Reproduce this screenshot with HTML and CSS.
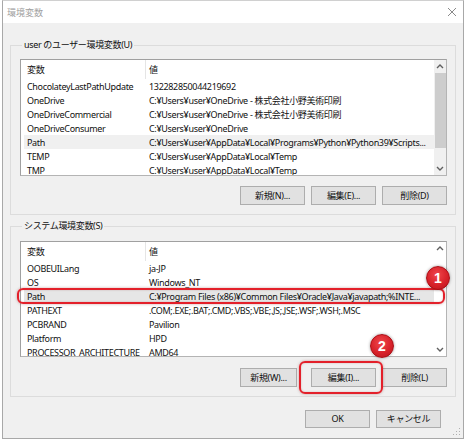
FILE: index.html
```html
<!DOCTYPE html>
<html lang="ja">
<head>
<meta charset="utf-8">
<title>環境変数</title>
<link rel="stylesheet" href="styles.css">
</head>
<body>
<div class="window">
  <div class="titlebar">
    <span class="title">環境変数</span>
    <svg class="close" width="10" height="10" viewBox="0 0 10 10"><path d="M1 1L9 9M9 1L1 9" stroke="#8a8a8a" stroke-width="1" fill="none"/></svg>
  </div>
  <div class="content">
    <fieldset class="group group-user">
      <legend>user のユーザー環境変数(U)</legend>
      <div class="list">
        <div class="list-body">
          <div class="list-header"><span class="col-name">変数</span><span class="col-value">値</span></div>
          <div class="row"><span class="col-name">ChocolateyLastPathUpdate</span><span class="col-value">132282850044219692</span></div>
          <div class="row"><span class="col-name">OneDrive</span><span class="col-value">C:¥Users¥user¥OneDrive - 株式会社小野美術印刷</span></div>
          <div class="row"><span class="col-name">OneDriveCommercial</span><span class="col-value">C:¥Users¥user¥OneDrive - 株式会社小野美術印刷</span></div>
          <div class="row"><span class="col-name">OneDriveConsumer</span><span class="col-value">C:¥Users¥user¥OneDrive</span></div>
          <div class="row row-selected"><span class="col-name">Path</span><span class="col-value">C:¥Users¥user¥AppData¥Local¥Programs¥Python¥Python39¥Scripts...</span></div>
          <div class="row"><span class="col-name">TEMP</span><span class="col-value">C:¥Users¥user¥AppData¥Local¥Temp</span></div>
          <div class="row"><span class="col-name">TMP</span><span class="col-value">C:¥Users¥user¥AppData¥Local¥Temp</span></div>
        </div>
        <div class="scrollbar">
          <div class="sb-arrow"><svg width="8" height="5" viewBox="0 0 8 5"><path d="M1 4L4 1L7 4" stroke="#606060" stroke-width="1.4" fill="none"/></svg></div>
          <div class="sb-track"><div class="sb-thumb"></div></div>
          <div class="sb-arrow"><svg width="8" height="5" viewBox="0 0 8 5"><path d="M1 1L4 4L7 1" stroke="#606060" stroke-width="1.4" fill="none"/></svg></div>
        </div>
      </div>
      <div class="buttons">
        <button class="btn">新規(N)...</button>
        <button class="btn">編集(E)...</button>
        <button class="btn">削除(D)</button>
      </div>
    </fieldset>

    <fieldset class="group group-system">
      <legend>システム環境変数(S)</legend>
      <div class="list list-system">
        <div class="list-body">
          <div class="list-header"><span class="col-name">変数</span><span class="col-value">値</span></div>
          <div class="row"><span class="col-name">OOBEUILang</span><span class="col-value">ja-JP</span></div>
          <div class="row"><span class="col-name">OS</span><span class="col-value">Windows_NT</span></div>
          <div class="row row-selected-dark"><span class="col-name">Path</span><span class="col-value">C:¥Program Files (x86)¥Common Files¥Oracle¥Java¥javapath;%INTE...</span></div>
          <div class="row"><span class="col-name">PATHEXT</span><span class="col-value">.COM;.EXE;.BAT;.CMD;.VBS;.VBE;.JS;.JSE;.WSF;.WSH;.MSC</span></div>
          <div class="row"><span class="col-name">PCBRAND</span><span class="col-value">Pavilion</span></div>
          <div class="row"><span class="col-name">Platform</span><span class="col-value">HPD</span></div>
          <div class="row"><span class="col-name">PROCESSOR_ARCHITECTURE</span><span class="col-value">AMD64</span></div>
        </div>
        <div class="scrollbar scrollbar-light">
          <div class="sb-arrow"><svg width="8" height="5" viewBox="0 0 8 5"><path d="M1 4L4 1L7 4" stroke="#606060" stroke-width="1.4" fill="none"/></svg></div>
          <div class="sb-track"></div>
          <div class="sb-arrow"><svg width="8" height="5" viewBox="0 0 8 5"><path d="M1 1L4 4L7 1" stroke="#606060" stroke-width="1.4" fill="none"/></svg></div>
        </div>
      </div>
      <div class="buttons">
        <button class="btn btn-narrow">新規(W)...</button>
        <button class="btn">編集(I)...</button>
        <button class="btn">削除(L)</button>
      </div>
    </fieldset>

    <div class="dialog-buttons">
      <button class="btn btn-dialog">OK</button>
      <button class="btn btn-dialog">キャンセル</button>
    </div>
  </div>

  <svg class="grip" width="8" height="8" viewBox="0 0 8 8">
    <rect x="6" y="0" width="1" height="1" fill="#b0b0b0"/>
    <rect x="3" y="3" width="1" height="1" fill="#b0b0b0"/>
    <rect x="6" y="3" width="1" height="1" fill="#b0b0b0"/>
    <rect x="0" y="6" width="1" height="1" fill="#b0b0b0"/>
    <rect x="3" y="6" width="1" height="1" fill="#b0b0b0"/>
    <rect x="6" y="6" width="1" height="1" fill="#b0b0b0"/>
  </svg>

  <div class="mark mark-row"></div>
  <div class="mark mark-button"></div>
  <div class="badge badge-1">1</div>
  <div class="badge badge-2">2</div>
</div>
</body>
</html>
```

FILE: styles.css
```css
* { box-sizing: border-box; }

html, body {
  margin: 0;
  padding: 0;
  background: #ffffff;
}

body {
  font-family: "Noto Sans", "Noto Sans CJK JP", sans-serif;
  font-size: 9px;
  letter-spacing: -0.33px;
  color: #111111;
}

.window {
  position: relative;
  margin-left: 2px;
  width: 462px;
  height: 439px;
  border: 1px solid #a8a8a8;
  border-top-color: #d0d0d0;
  background: #f0f0f0;
  overflow: hidden;
}

.titlebar {
  height: 22px;
  background: #ffffff;
  display: flex;
  align-items: center;
  justify-content: space-between;
  padding: 0 6px 0 4px;
}

.title {
  font-family: "Noto Sans CJK JP", sans-serif;
  font-size: 9px;
  letter-spacing: 0;
  color: #a0a0a0;
}

.close { display: block; }

.content {
  padding: 0 7px;
}

.group {
  margin: 0;
  border: 1px solid #dcdcdc;
  padding: 8px 8px 9px 9px;
  min-width: 0;
}

.group legend {
  padding: 0 2px;
  margin-left: 2px;
  line-height: 12px;
  font-size: 9px;
  color: #111111;
}

.group-user { margin-top: 16px; }
.group-system { margin-top: 5px; padding-top: 9px; }

.list {
  display: flex;
  height: 117px;
  border: 1px solid #a0a0a0;
  border-right-color: #b4b4b4;
  border-bottom-color: #b4b4b4;
  background: #ffffff;
  overflow: hidden;
}

.list-system { height: 116px; }

.list-body {
  flex: 1;
  overflow: hidden;
  min-width: 0;
}

.list-header {
  display: flex;
  height: 19px;
  align-items: center;
}

.list-header .col-name {
  border-right: 1px solid #e5e5e5;
  align-self: stretch;
  display: flex;
  align-items: center;
}

.row {
  display: flex;
  height: 14px;
  align-items: center;
  margin-left: 3px;
  white-space: nowrap;
}

.col-name { flex-shrink: 0; white-space: nowrap; }

.row .col-name { width: 122px; padding-left: 3px; }
.list-header .col-name { width: 125px; padding-left: 6px; }

.col-value { padding-left: 3px; white-space: nowrap; }
.list-header .col-value { padding-left: 3px; }

.row-selected { background: #f0f0f0; }
.row-selected-dark { background: #e6e6e6; }

.scrollbar {
  width: 12px;
  flex-shrink: 0;
  display: flex;
  flex-direction: column;
  background: #f0f0f0;
}

.scrollbar-light { background: #ffffff; }

.sb-arrow {
  height: 13px;
  display: flex;
  align-items: center;
  justify-content: center;
}

.sb-arrow svg { display: block; }

.sb-track {
  flex: 1;
}

.sb-thumb {
  height: 75px;
  background: #cdcdcd;
  margin: 0 0 0 1px;
}

.buttons {
  display: flex;
  justify-content: flex-end;
  gap: 6px;
  margin-top: 10px;
}

.group-system .buttons { margin-top: 11px; }

.btn {
  width: 65px;
  height: 19px;
  padding: 0;
  margin: 0;
  background: #e1e1e1;
  border: 1px solid #adadad;
  font-family: "Noto Sans", "Noto Sans CJK JP", sans-serif;
  font-size: 9px;
  letter-spacing: -0.3px;
  color: #111111;
  line-height: 17px;
}

.btn-narrow { width: 57px; margin-right: 8px; }

.dialog-buttons {
  display: flex;
  justify-content: flex-end;
  gap: 6px;
  margin-top: 13px;
  padding-right: 15px;
}

.btn-dialog { height: 18px; line-height: 16px; }

.grip {
  position: absolute;
  right: 2px;
  bottom: 2px;
}

.mark {
  position: absolute;
  border: 2px solid #e3202a;
  border-radius: 6px;
  box-shadow: 0 0 3px rgba(120, 0, 0, 0.35), inset 0 0 2px rgba(120, 0, 0, 0.25);
}

.mark-row {
  left: 14px;
  top: 287px;
  width: 428px;
  height: 16px;
}

.mark-button {
  left: 296px;
  top: 360px;
  width: 84px;
  height: 33px;
}

.badge {
  position: absolute;
  width: 24px;
  height: 24px;
  border-radius: 50%;
  background: radial-gradient(circle at 45% 35%, #f0484c 0%, #d8222a 55%, #b8141b 100%);
  border: 1px solid #a80f16;
  box-shadow: 0 0 3px rgba(0, 0, 0, 0.35);
  color: #ffffff;
  font-family: "Liberation Sans", Arial, sans-serif;
  font-weight: bold;
  font-size: 14px;
  letter-spacing: 0;
  display: flex;
  align-items: center;
  justify-content: center;
}

.badge-1 { left: 423px; top: 265px; }
.badge-2 { left: 367px; top: 333px; }
```
